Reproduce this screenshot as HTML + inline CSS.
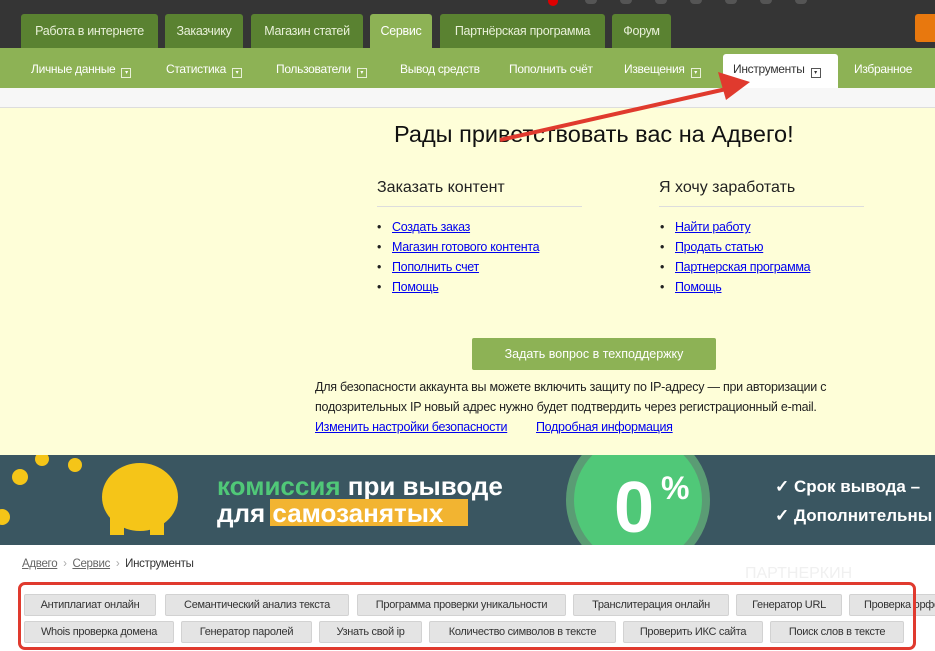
<!DOCTYPE html>
<html><head><meta charset="utf-8"><style>
*{margin:0;padding:0;box-sizing:border-box}
body{width:935px;height:651px;overflow:hidden;background:#fff;font-family:"Liberation Sans",sans-serif;position:relative}
.a{position:absolute;white-space:nowrap}
.tab{position:absolute;top:14px;height:34px;background:#5a8231;color:#e8f0d8;font-size:12.5px;line-height:34px;text-align:center;border-radius:3px 3px 0 0;letter-spacing:-0.3px}
.sub{position:absolute;top:62px;color:#fff;font-size:12px;letter-spacing:-0.3px}
.dd{display:inline-block;width:10px;height:10px;border:1px solid #e8f0d8;vertical-align:-1px;margin-left:6px;font-size:6px;line-height:8px;text-align:center}
a{color:#1a0dab}
.l a{color:#0000ee}
.li{position:absolute;font-size:12.5px;letter-spacing:-0.3px}
.li:before{content:"•";position:absolute;left:-15px;color:#222}
.btn{position:absolute;height:22px;background:#e4e4e4;border:1px solid #d2d2d2;border-radius:2px;font-size:11px;line-height:20px;text-align:center;color:#333;letter-spacing:-0.3px}
</style></head><body>
<div class="a" style="left:0;top:0;width:935px;height:48px;background:#353535"></div>
<div class="a" style="left:548px;top:0;width:10px;height:6px;background:#d00;border-radius:0 0 5px 5px"></div>
<div class="a" style="left:585px;top:0;width:12px;height:4px;background:#555;border-radius:0 0 6px 6px"></div>
<div class="a" style="left:620px;top:0;width:12px;height:4px;background:#555;border-radius:0 0 6px 6px"></div>
<div class="a" style="left:655px;top:0;width:12px;height:4px;background:#555;border-radius:0 0 6px 6px"></div>
<div class="a" style="left:690px;top:0;width:12px;height:4px;background:#555;border-radius:0 0 6px 6px"></div>
<div class="a" style="left:725px;top:0;width:12px;height:4px;background:#555;border-radius:0 0 6px 6px"></div>
<div class="a" style="left:760px;top:0;width:12px;height:4px;background:#555;border-radius:0 0 6px 6px"></div>
<div class="a" style="left:795px;top:0;width:12px;height:4px;background:#555;border-radius:0 0 6px 6px"></div>
<div class="tab" style="left:21px;width:137px">Работа в интернете</div>
<div class="tab" style="left:165px;width:78px">Заказчику</div>
<div class="tab" style="left:251px;width:112px">Магазин статей</div>
<div class="tab" style="left:370px;width:62px;background:#8db255;color:#fff">Сервис</div>
<div class="tab" style="left:440px;width:165px">Партнёрская программа</div>
<div class="tab" style="left:612px;width:59px">Форум</div>
<div class="a" style="left:915px;top:14px;width:30px;height:28px;background:#e8780e;border-radius:3px"></div>
<div class="a" style="left:0;top:48px;width:935px;height:40px;background:#8db255"></div>
<div class="a" style="left:723px;top:54px;width:115px;height:34px;background:#fff;border-radius:3px 3px 0 0"></div>
<div class="sub" style="left:31px">Личные данные<span class="dd">▾</span></div>
<div class="sub" style="left:166px">Статистика<span class="dd">▾</span></div>
<div class="sub" style="left:276px">Пользователи<span class="dd">▾</span></div>
<div class="sub" style="left:400px">Вывод средств</div>
<div class="sub" style="left:509px">Пополнить счёт</div>
<div class="sub" style="left:624px">Извещения<span class="dd">▾</span></div>
<div class="sub" style="left:733px;color:#333">Инструменты<span class="dd" style="border-color:#555">▾</span></div>
<div class="sub" style="left:854px">Избранное</div>
<div class="a" style="left:0;top:88px;width:935px;height:20px;background:#f7f7f7;border-bottom:1px solid #ddd"></div>
<div class="a" style="left:0;top:108px;width:935px;height:347px;background:#fefed8"></div>
<div class="a" style="left:394px;top:121px;font-size:23.5px;color:#111">Рады приветствовать вас на Адвего!</div>
<div class="a" style="left:377px;top:179px;font-size:16px;color:#222">Заказать контент</div>
<div class="a" style="left:377px;top:206px;width:205px;border-top:1px solid #ddd"></div>
<div class="a" style="left:659px;top:179px;font-size:16px;color:#222">Я хочу заработать</div>
<div class="a" style="left:659px;top:206px;width:205px;border-top:1px solid #ddd"></div>
<div class="li l" style="left:392px;top:220px"><a href="#">Создать заказ</a></div>
<div class="li l" style="left:392px;top:240px"><a href="#">Магазин готового контента</a></div>
<div class="li l" style="left:392px;top:260px"><a href="#">Пополнить счет</a></div>
<div class="li l" style="left:392px;top:280px"><a href="#">Помощь</a></div>
<div class="li l" style="left:675px;top:220px"><a href="#">Найти работу</a></div>
<div class="li l" style="left:675px;top:240px"><a href="#">Продать статью</a></div>
<div class="li l" style="left:675px;top:260px"><a href="#">Партнерская программа</a></div>
<div class="li l" style="left:675px;top:280px"><a href="#">Помощь</a></div>
<div class="a" style="left:472px;top:338px;width:244px;height:32px;background:#8db255;border-radius:2px;color:#fff;font-size:12.5px;line-height:32px;text-align:center">Задать вопрос в техподдержку</div>
<div class="a" style="left:315px;top:377px;font-size:12.5px;color:#222;line-height:20px;letter-spacing:-0.25px">Для безопасности аккаунта вы можете включить защиту по IP-адресу — при авторизации с<br>подозрительных IP новый адрес нужно будет подтвердить через регистрационный e-mail.</div>
<div class="a l" style="left:315px;top:420px;font-size:12.5px;letter-spacing:-0.3px"><a href="#">Изменить настройки безопасности</a></div>
<div class="a l" style="left:536px;top:420px;font-size:12.5px;letter-spacing:-0.3px"><a href="#">Подробная информация</a></div>
<svg class="a" style="left:0;top:455px" width="935" height="90">
<rect width="935" height="90" fill="#3a5661"/>
<circle cx="20" cy="22" r="8" fill="#f5c518"/><circle cx="2" cy="62" r="8" fill="#f5c518"/><circle cx="42" cy="4" r="7" fill="#f5c518"/><circle cx="75" cy="10" r="7" fill="#f5c518"/>
<ellipse cx="140" cy="42" rx="38" ry="34" fill="#f5c518"/><rect x="110" y="58" width="14" height="22" fill="#f5c518"/><rect x="150" y="58" width="14" height="22" fill="#f5c518"/>
<circle cx="638" cy="45" r="72" fill="#5a9c74"/><circle cx="638" cy="45" r="64" fill="#50c878"/>
<text x="217" y="40" font-family="Liberation Sans" font-weight="bold" font-size="26" fill="#50c878">комиссия <tspan fill="#fff">при выводе</tspan></text>
<rect x="270" y="44" width="198" height="27" fill="#f2b431"/>
<text x="217" y="67" font-family="Liberation Sans" font-weight="bold" font-size="26" fill="#fff">для самозанятых</text>
<text x="614" y="77" font-family="Liberation Sans" font-weight="bold" font-size="72" fill="#fff">0</text>
<text x="661" y="44" font-family="Liberation Sans" font-weight="bold" font-size="32" fill="#fff">%</text>
<text x="775" y="37" font-family="Liberation Sans" font-weight="bold" font-size="17" fill="#fff">✓  Срок вывода –</text>
<text x="775" y="66" font-family="Liberation Sans" font-weight="bold" font-size="17" fill="#fff">✓  Дополнительны</text>
</svg>
<div class="a" style="left:22px;top:558px;font-size:11.5px;color:#333;letter-spacing:-0.3px"><span style="color:#666;text-decoration:underline">Адвего</span> <span style="color:#aaa">&nbsp;›&nbsp;</span> <span style="color:#666;text-decoration:underline">Сервис</span> <span style="color:#aaa">&nbsp;›&nbsp;</span> Инструменты</div>
<div class="a" style="left:745px;top:565px;font-size:16px;color:#f0f0f0">ПАРТНЕРКИН</div>
<div class="btn" style="left:24px;top:594px;width:132px">Антиплагиат онлайн</div>
<div class="btn" style="left:165px;top:594px;width:184px">Семантический анализ текста</div>
<div class="btn" style="left:357px;top:594px;width:209px">Программа проверки уникальности</div>
<div class="btn" style="left:573px;top:594px;width:156px">Транслитерация онлайн</div>
<div class="btn" style="left:736px;top:594px;width:106px">Генератор URL</div>
<div class="btn" style="left:849px;top:594px;width:100px;text-align:left;padding-left:14px">Проверка орфо</div>
<div class="btn" style="left:24px;top:621px;width:150px">Whois проверка домена</div>
<div class="btn" style="left:181px;top:621px;width:131px">Генератор паролей</div>
<div class="btn" style="left:319px;top:621px;width:103px">Узнать свой ip</div>
<div class="btn" style="left:429px;top:621px;width:187px">Количество символов в тексте</div>
<div class="btn" style="left:623px;top:621px;width:140px">Проверить ИКС сайта</div>
<div class="btn" style="left:770px;top:621px;width:134px">Поиск слов в тексте</div>
<div class="a" style="left:18px;top:582px;width:898px;height:68px;border:3px solid #e03a2e;border-radius:7px"></div>
<svg class="a" style="left:0;top:0" width="935" height="651"><line x1="500" y1="140" x2="735" y2="87" stroke="#e03a2e" stroke-width="4"/><polygon points="750,82 718,72 726,100" fill="#e03a2e"/></svg>
</body></html>
